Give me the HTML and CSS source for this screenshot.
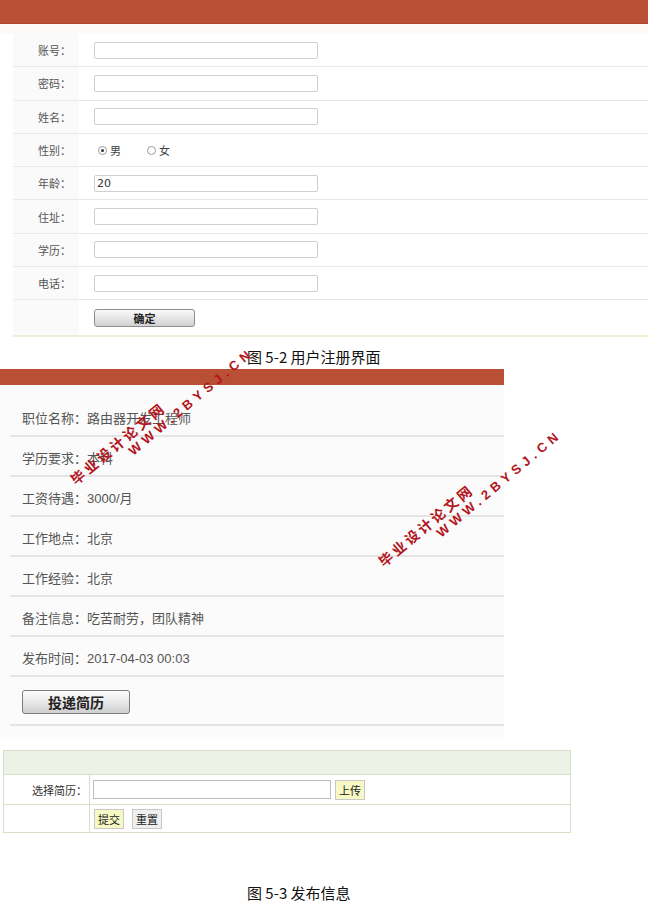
FILE: index.html
```html
<!DOCTYPE html>
<html lang="zh-CN">
<head>
    <meta charset="UTF-8">
    <meta name="viewport" content="width=device-width, initial-scale=1.0">
    <title>用户注册 / 发布信息</title>
    <link rel="stylesheet" href="styles.css">
</head>
<body>
    <div class="page">

        <!-- 用户注册 -->
        <div class="reg">
            <div class="reg-bar"></div>
            <div class="reg-strip"></div>
            <div class="reg-form">
                <div class="reg-row">
                    <div class="reg-label">账号：</div>
                    <div class="reg-field"><input class="reg-input" type="text"></div>
                </div>
                <div class="reg-row">
                    <div class="reg-label">密码：</div>
                    <div class="reg-field"><input class="reg-input" type="password"></div>
                </div>
                <div class="reg-row">
                    <div class="reg-label">姓名：</div>
                    <div class="reg-field"><input class="reg-input" type="text"></div>
                </div>
                <div class="reg-row">
                    <div class="reg-label">性别：</div>
                    <div class="reg-field">
                        <span class="radio checked"></span><span class="radio-text">男</span>
                        <span class="radio"></span><span class="radio-text">女</span>
                    </div>
                </div>
                <div class="reg-row">
                    <div class="reg-label">年龄：</div>
                    <div class="reg-field"><input class="reg-input" type="text" value="20"></div>
                </div>
                <div class="reg-row">
                    <div class="reg-label">住址：</div>
                    <div class="reg-field"><input class="reg-input" type="text"></div>
                </div>
                <div class="reg-row">
                    <div class="reg-label">学历：</div>
                    <div class="reg-field"><input class="reg-input" type="text"></div>
                </div>
                <div class="reg-row">
                    <div class="reg-label">电话：</div>
                    <div class="reg-field"><input class="reg-input" type="text"></div>
                </div>
                <div class="reg-row reg-last">
                    <div class="reg-label"></div>
                    <div class="reg-field"><button class="reg-btn">确定</button></div>
                </div>
            </div>
        </div>

        <p class="caption caption-first">图 5-2 用户注册界面</p>

        <!-- 职位信息 -->
        <div class="job">
            <div class="job-bar"></div>
            <div class="job-body">
                <div class="job-row">职位名称：路由器开发工程师</div>
                <div class="job-row">学历要求：本科</div>
                <div class="job-row">工资待遇：3000/月</div>
                <div class="job-row">工作地点：北京</div>
                <div class="job-row">工作经验：北京</div>
                <div class="job-row">备注信息：吃苦耐劳，团队精神</div>
                <div class="job-row">发布时间：2017-04-03 00:03</div>
                <div class="job-row job-action"><button class="job-btn">投递简历</button></div>
            </div>
        </div>

        <!-- 投递简历 -->
        <table class="upload">
            <tr class="upload-head"><td colspan="2"></td></tr>
            <tr class="upload-file">
                <td class="upload-label">选择简历：</td>
                <td>
                    <input class="upload-input" type="text">
                    <button class="small-btn yellow">上传</button>
                </td>
            </tr>
            <tr class="upload-actions">
                <td class="upload-label"></td>
                <td>
                    <button class="small-btn yellow">提交</button>
                    <button class="small-btn gray">重置</button>
                </td>
            </tr>
        </table>

        <p class="caption caption-second">图 5-3 发布信息</p>

        <!-- watermarks -->
        <div class="wm wm-one">
            <div>毕业设计论文网</div>
            <div class="wm-url">WWW.2BYSJ.CN</div>
        </div>
        <div class="wm wm-two">
            <div>毕业设计论文网</div>
            <div class="wm-url">WWW.2BYSJ.CN</div>
        </div>
    </div>
</body>
</html>
```

FILE: styles.css
```css
/* General Styles */
body {
    margin: 0;
    padding: 0;
    background: #fff;
    font-family: "Liberation Sans", "Noto Sans CJK SC", sans-serif;
}

.page {
    position: relative;
    width: 648px;
    height: 908px;
    overflow: hidden;
}

/* ---------- register form ---------- */
.reg-bar {
    height: 23px;
    background: #b94f34;
    border-bottom: 1px solid #a8462e;
}

.reg-strip {
    height: 10px;
    background: #fcf9f7;
}

.reg-form {
    padding-left: 13px;
}

.reg-row {
    display: flex;
    height: 33.3px;
    box-sizing: border-box;
    border-bottom: 1px solid #e8e8e8;
}

.reg-label {
    width: 66px;
    box-sizing: border-box;
    padding-right: 8px;
    background: #fafafa;
    text-align: right;
    font-size: 11px;
    color: #555;
    display: flex;
    align-items: center;
    justify-content: flex-end;
}

.reg-field {
    flex: 1;
    display: flex;
    align-items: center;
    padding-left: 15px;
    font-size: 11px;
    color: #444;
}

.reg-input {
    width: 224px;
    height: 17px;
    box-sizing: border-box;
    border: 1px solid #cfcfcf;
    border-radius: 2px;
    padding: 0 2px;
    margin: 0;
    font-family: "DejaVu Sans", sans-serif;
    font-size: 11px;
    color: #333;
    background: #fff;
}

.radio {
    width: 7px;
    height: 7px;
    border: 1px solid #999;
    border-radius: 50%;
    margin-left: 4px;
    margin-right: 3px;
    position: relative;
    background: #fff;
}

.radio.checked::after {
    content: "";
    position: absolute;
    left: 2px;
    top: 2px;
    width: 3px;
    height: 3px;
    border-radius: 50%;
    background: #333;
}

.radio-text {
    margin-right: 22px;
    font-size: 11px;
}

.reg-last {
    height: 37px;
    border-bottom: 2px solid #f2ecd0;
}

.reg-btn {
    width: 101px;
    height: 18px;
    padding: 0;
    border: 1px solid #8d8d8d;
    border-radius: 3px;
    background: linear-gradient(#fbfbfb, #e6e6e6 50%, #d2d2d2);
    font-family: "Noto Sans CJK SC", sans-serif;
    font-size: 11px;
    font-weight: bold;
    color: #222;
}

/* ---------- captions ---------- */
.caption {
    margin: 0;
    padding-left: 247px;
    font-family: "Noto Sans CJK SC", sans-serif;
    font-size: 15px;
    line-height: 20px;
    color: #111;
}

.caption-first {
    margin-top: 10px;
    margin-bottom: 2px;
}

.caption-second {
    margin-top: 50px;
}

/* ---------- job detail ---------- */
.job {
    width: 504px;
}

.job-bar {
    height: 16px;
    background: #b94f34;
}

.job-body {
    background: #fbfbfb;
    padding: 12px 0 11px 10px;
}

.job-row {
    height: 40px;
    box-sizing: border-box;
    border-bottom: 2px solid #e4e4e4;
    padding: 2px 0 0 12px;
    display: flex;
    align-items: center;
    font-size: 13px;
    color: #555;
}

.job-action {
    height: 49px;
}

.job-btn {
    width: 108px;
    height: 24px;
    padding: 0;
    border: 1px solid #7d7d7d;
    border-radius: 3px;
    background: linear-gradient(#fdfdfd, #e8e8e8 50%, #cfcfcf);
    font-family: "Noto Sans CJK SC", sans-serif;
    font-size: 14px;
    font-weight: bold;
    color: #222;
}

/* ---------- upload table ---------- */
.upload {
    margin: 13px 0 0 3px;
    width: 568px;
    border-collapse: collapse;
    font-size: 11px;
    color: #333;
}

.upload td {
    border: 1px solid #d9dec9;
    padding: 0 0 0 3px;
}

.upload-head td {
    height: 23px;
    background: #edf2e7;
}

.upload-file td {
    height: 29px;
}

.upload-actions td {
    height: 27px;
}

.upload .upload-label {
    width: 80px;
    text-align: right;
    padding-right: 2px;
}

.upload-input {
    width: 238px;
    height: 19px;
    box-sizing: border-box;
    border: 1px solid #bdbdbd;
    margin: 0;
    vertical-align: middle;
}

.small-btn {
    height: 20px;
    padding: 0 3px;
    margin: 0 0 0 1px;
    border: 1px solid #c8c8c8;
    font-family: "Noto Sans CJK SC", sans-serif;
    font-size: 11px;
    color: #222;
    vertical-align: middle;
}

.small-btn.yellow {
    background: #f7f9c5;
}

.small-btn.gray {
    background: #efefef;
    margin-left: 5px;
}

/* ---------- watermarks ---------- */
.wm {
    position: absolute;
    transform: rotate(-40deg);
    transform-origin: 0 0;
    color: #b3141c;
    font-family: "Noto Sans CJK SC", sans-serif;
    font-weight: bold;
    font-size: 14px;
    letter-spacing: 3px;
    line-height: 16px;
    white-space: nowrap;
    pointer-events: none;
}

.wm-url {
    padding-left: 63px;
    font-family: "Liberation Sans", sans-serif;
    font-size: 13px;
    letter-spacing: 4.6px;
}

.wm-one {
    left: 67px;
    top: 475px;
}

.wm-two {
    left: 375px;
    top: 557px;
}
```
